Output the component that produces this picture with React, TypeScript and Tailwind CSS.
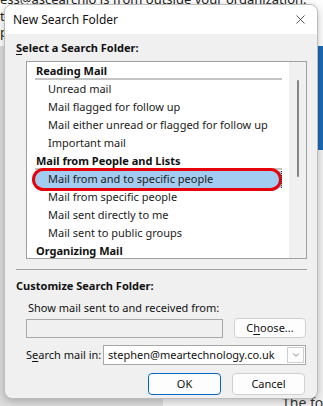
import { X, ChevronDown } from "lucide-react";

type Row = { label: string; header?: boolean; selected?: boolean };

const rows: Row[] = [
  { label: "Reading Mail", header: true },
  { label: "Unread mail" },
  { label: "Mail flagged for follow up" },
  { label: "Mail either unread or flagged for follow up" },
  { label: "Important mail" },
  { label: "Mail from People and Lists", header: true },
  { label: "Mail from and to specific people", selected: true },
  { label: "Mail from specific people" },
  { label: "Mail sent directly to me" },
  { label: "Mail sent to public groups" },
  { label: "Organizing Mail", header: true },
];

function FolderRow({ row }: { row: Row }) {
  if (row.header) {
    return (
      <div className="h-[18px] flex items-end pl-[8px] pr-[7px]">
        <div className="w-full border-b-2 border-[#c4c4c4] pl-[1px] leading-[15px] font-bold text-[#111] whitespace-nowrap">
          {row.label}
        </div>
      </div>
    );
  }
  return (
    <div className="h-[18px] pl-[8px] pr-[7px] flex items-center">
      <div
        className={
          row.selected
            ? "relative w-full h-[17px] flex items-center pl-[13px] bg-[#a3cdf0] whitespace-nowrap"
            : "w-full h-[17px] flex items-center pl-[13px] whitespace-nowrap"
        }
      >
        {row.label}
        {row.selected && (
          <>
            <div className="absolute -left-[3px] -top-[3px] -bottom-[3px] right-[0px] rounded-full border-[3px] border-[#e8000a]" />
            <div className="absolute right-0 top-0 bottom-0 w-px border-r border-dotted border-[#333]" />
          </>
        )}
      </div>
    </div>
  );
}

export default function App() {
  return (
    <div
      className="relative w-[323px] h-[406px] overflow-hidden bg-white text-[11px] leading-[16px] text-[#1b1b1b]"
      style={{ fontFamily: '"Noto Sans", "Open Sans", sans-serif' }}
    >
      {/* Outlook window behind the dialog */}
      <div className="absolute inset-0 flex flex-col">
        <div className="h-[46px] bg-white text-[13px] leading-[16px] text-[#222]">
          <div className="-mt-[9px] whitespace-nowrap">ess@ascearchio is from outside your organization.</div>
          <div className="mt-[1px]">tl</div>
          <div>p</div>
        </div>
        <div className="flex flex-1">
          <div className="w-[163px] bg-[#dcdcdc]" />
          <div className="flex-1 bg-[#f3f3f3] flex justify-end">
            <div className="w-[6px] h-[104px] bg-[#1d6bb5]" />
          </div>
        </div>
        <div className="absolute left-[282px] top-[395px] text-[14px] leading-[16px] text-[#333] whitespace-nowrap">The fo</div>
      </div>

      {/* Dialog */}
      <div className="absolute left-[4px] top-[4px] w-[314px] h-[395px] rounded-[8px] bg-[#f0f0f0] border border-[#bcbcbc] shadow-[0_2px_8px_rgba(0,0,0,0.25)] overflow-hidden flex flex-col">
        <div className="h-[29px] shrink-0 bg-white flex items-center justify-between pl-[8px] pr-[9px]">
          <span className="text-[12px] text-[#111] pt-[1px] whitespace-nowrap">New Search Folder</span>
          <X className="w-[15px] h-[15px] text-[#222]" strokeWidth={1.2} />
        </div>

        <div className="px-[11px] pt-[6px]">
          <div className="font-bold text-[#111] whitespace-nowrap">
            <span className="underline underline-offset-2">S</span>elect a Search Folder:
          </div>

          <div className="ml-[10px] mt-[5px] w-[281px] h-[198px] bg-white border border-[#a0a0a0] flex">
            <div className="flex-1 overflow-hidden">
              {rows.map((r) => (
                <FolderRow key={r.label} row={r} />
              ))}
            </div>
            <div className="w-[17px] bg-[#f0f0f0] flex justify-center pt-[18px]">
              <div className="w-[2px] h-[97px] bg-[#858585] rounded-full" />
            </div>
          </div>

          <div className="mt-[10px] border-t border-[#a0a0a0] w-[291px]" />

          <div className="mt-[8px] font-bold text-[#111] whitespace-nowrap">Customize Search Folder:</div>
          <div className="mt-[6px] ml-[12px] text-[#111] whitespace-nowrap">Show mail sent to and received from:</div>

          <div className="mt-[2px] ml-[10px] flex items-center gap-[11px]">
            <div className="w-[197px] h-[19px] border border-[#a8a8a8] bg-[#f0f0f0]" />
            <button className="w-[72px] h-[20px] rounded-[4px] border border-[#d0d0d0] bg-[#fdfdfd] text-[#111] whitespace-nowrap">
              C<span className="underline underline-offset-2">h</span>oose...
            </button>
          </div>

          <div className="mt-[7px] ml-[10px] flex items-center gap-[4px]">
            <span className="text-[#111] whitespace-nowrap w-[73px]">
              S<span className="underline underline-offset-2">e</span>arch mail in:
            </span>
            <div className="w-[204px] h-[20px] border border-[#a8a8a8] bg-white flex items-center justify-between pl-[4px] pr-[1px]">
              <span className="text-[#111] whitespace-nowrap">stephen@meartechnology.co.uk</span>
              <div className="w-[17px] h-[16px] border border-[#cfcfcf] bg-[#fcfcfc] flex items-center justify-center">
                <ChevronDown className="w-[10px] h-[10px] text-[#444]" strokeWidth={1.5} />
              </div>
            </div>
          </div>

          <div className="mt-[8px] flex justify-end gap-[11px] pr-[1px]">
            <button className="w-[73px] h-[22px] rounded-[4px] border border-[#0067c0] bg-[#fdfdfd] text-[#111]">OK</button>
            <button className="w-[73px] h-[22px] rounded-[4px] border border-[#d0d0d0] bg-[#fdfdfd] text-[#111]">Cancel</button>
          </div>
        </div>
      </div>
    </div>
  );
}
